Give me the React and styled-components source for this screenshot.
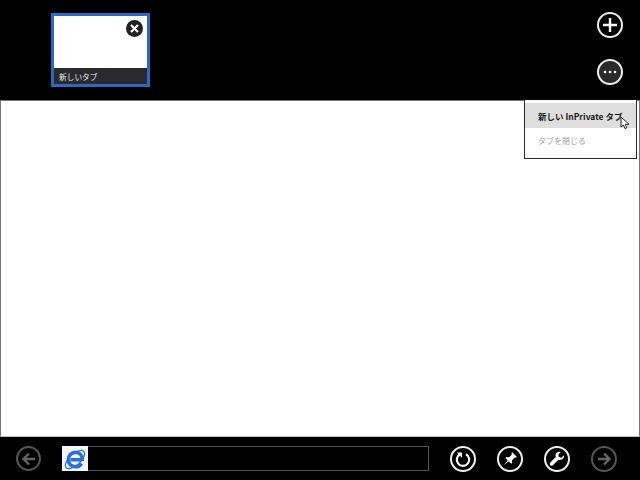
import React from 'react'
import styled, { createGlobalStyle } from 'styled-components'

const Global = createGlobalStyle`
  html, body { margin: 0; padding: 0; background: #000; }
  body { font-family: "Noto Sans CJK JP", "Noto Sans", sans-serif; }
`

const Screen = styled.div`
  position: relative;
  width: 640px;
  height: 480px;
  display: flex;
  flex-direction: column;
  overflow: hidden;
  background: #000;
`

const TabBar = styled.div`
  height: 100px;
  flex: none;
  display: flex;
  justify-content: space-between;
  padding: 13px 17px 0 51px;
  box-sizing: border-box;
  background: #000;
`

const Thumb = styled.div`
  position: relative;
  width: 99px;
  height: 74px;
  box-sizing: border-box;
  border: 3px solid #2c68c4;
  background: #fff;
  display: flex;
  flex-direction: column;
  justify-content: flex-end;
`

const Caption = styled.div`
  height: 16px;
  background: #2a2a2c;
  color: #eee;
  font-size: 7.700px;
  line-height: 17px;
  padding-left: 5px;
`

const CloseBadge = styled.div`
  position: absolute;
  top: 4px;
  right: 4px;
  width: 17px;
  height: 17px;
  border-radius: 50%;
  background: #222;
  display: flex;
  align-items: center;
  justify-content: center;
`

const TabActions = styled.div`
  display: flex;
  flex-direction: column;
  align-items: center;
  gap: 21px;
  margin-top: -1px;
`

const Round = styled.div`
  width: ${p => p.$size || 26}px;
  height: ${p => p.$size || 26}px;
  box-sizing: border-box;
  border-radius: 50%;
  border: 2px solid ${p => (p.$dim ? '#555' : '#eee')};
  background: ${p => p.$fill || 'transparent'};
  display: flex;
  align-items: center;
  justify-content: center;
  flex: none;
`

const Page = styled.div`
  flex: 1;
  background: #fff;
  border: 1px solid #777;
  border-bottom-color: #bbb;
`

const BottomBar = styled.div`
  height: 43px;
  flex: none;
  display: flex;
  align-items: center;
  padding: 0 23px 0 16px;
  box-sizing: border-box;
  background: #000;
`

const AddressBar = styled.div`
  width: 367px;
  height: 25px;
  margin-left: 21px;
  margin-right: 21px;
  box-sizing: border-box;
  border: 1px solid #555;
  flex: none;
  display: flex;
`

const SiteIcon = styled.div`
  width: 26px;
  height: 25px;
  margin: -1px 0 0 -1px;
  background: #f4f6fa;
  display: flex;
  align-items: center;
  justify-content: center;
`

const BarButtons = styled.div`
  display: flex;
  gap: 21px;
  align-items: center;
`

const Menu = styled.div`
  position: absolute;
  top: 100px;
  left: 524px;
  width: 113px;
  height: 59px;
  box-sizing: border-box;
  border: 1px solid #2a2a2a;
  border-top: none;
  background: #fff;
  padding-top: 3px;
`

const MenuItem = styled.div`
  height: ${p => (p.$active ? 25 : 28)}px;
  line-height: ${p => (p.$active ? 27 : 26)}px;
  padding-left: 13px;
  font-size: ${p => (p.$active ? 8.5 : 8)}px;
  font-weight: ${p => (p.$active ? 700 : 400)};
  white-space: nowrap;
  color: ${p => (p.$active ? '#1a1a1a' : '#a0a0a0')};
  background: ${p => (p.$active ? '#dedede' : 'transparent')};
`

const Cursor = styled.svg`
  position: absolute;
  left: 620px;
  top: 116px;
`

const Arrow = ({ flip, color }) => (
  <svg width="16" height="14" viewBox="0 0 16 14" style={flip ? { transform: 'scaleX(-1)' } : undefined}>
    <path d="M8 1.500L2.500 7 8 12.500M3 7h11" fill="none" stroke={color} strokeWidth="2.400" />
  </svg>
)

const IeLogo = () => (
  <svg width="24" height="24" viewBox="0 0 24 24">
    <ellipse cx="12" cy="12.500" rx="12" ry="5.500" transform="rotate(-42 12 12.500)" fill="none" stroke="#2a6fdc" strokeWidth="1.200" />
    <path
      d="M18.500 12.800H7.500M18.500 16.500c-1.300 2.200-3.400 3.300-6 3.300-4.200 0-7.200-3-7.200-7.200s3-7.200 7.200-7.200 6.800 3 6.800 7.200v1.500"
      fill="none"
      stroke="#2a6fdc"
      strokeWidth="3.600"
    />
  </svg>
)

const App = () => (
  <Screen>
    <Global />
    <TabBar>
      <Thumb>
        <CloseBadge>
          <svg width="9" height="9" viewBox="0 0 9 9">
            <path d="M1 1l7 7M8 1L1 8" stroke="#fff" strokeWidth="2.200" />
          </svg>
        </CloseBadge>
        <Caption>新しいタブ</Caption>
      </Thumb>
      <TabActions>
        <Round>
          <svg width="14" height="14" viewBox="0 0 14 14">
            <path d="M7 0v14M0 7h14" stroke="#fff" strokeWidth="2.400" />
          </svg>
        </Round>
        <Round $fill="#2a2a2a">
          <svg width="14" height="4" viewBox="0 0 14 4">
            <circle cx="2" cy="2" r="1.300" fill="#fff" />
            <circle cx="7" cy="2" r="1.300" fill="#fff" />
            <circle cx="12" cy="2" r="1.300" fill="#fff" />
          </svg>
        </Round>
      </TabActions>
    </TabBar>
    <Page />
    <BottomBar>
      <Round $size={25} $dim>
        <Arrow color="#666" />
      </Round>
      <AddressBar>
        <SiteIcon>
          <IeLogo />
        </SiteIcon>
      </AddressBar>
      <BarButtons>
        <Round>
          <svg width="16" height="16" viewBox="0 0 16 16">
            <path d="M5 3.200a6.200 6.200 0 1 0 6 0" fill="none" stroke="#fff" strokeWidth="2.200" />
            <path d="M1.800 1.500h5.200v5.200z" fill="#fff" />
          </svg>
        </Round>
        <Round>
          <svg width="16" height="16" viewBox="0 0 16 16">
            <path d="M10 1l5 5-1.500 .8-.8-.3-2.700 2.700.2 2.600-1 1L3.500 7.100l1-1 2.600.2 2.700-2.700-.3-.8zM5.800 9.200L2 14l4.800-3.800z" fill="#fff" />
          </svg>
        </Round>
        <Round>
          <svg width="16" height="16" viewBox="0 0 16 16">
            <path
              d="M15 4.300l-2.600 2.400-2.500-.6-.6-2.500L11.700 1c-2-.6-4.400.3-5 2.300-.3 1-.2 2 .1 2.800L1.300 11.600c-.7.7-.7 1.800 0 2.600.8.700 1.900.7 2.600 0l5.500-5.500c2.800 1 6.200-1.200 5.600-4.400z"
              fill="#fff"
            />
          </svg>
        </Round>
        <Round $dim>
          <Arrow flip color="#666" />
        </Round>
      </BarButtons>
    </BottomBar>
    <Menu>
      <MenuItem $active>新しい InPrivate タブ</MenuItem>
      <MenuItem>タブを閉じる</MenuItem>
    </Menu>
    <Cursor width="10" height="14" viewBox="0 0 10 14">
      <path d="M1 1v10l2.400-2 1.600 3.600 1.800-.8-1.600-3.500H9z" fill="#fff" stroke="#222" strokeWidth="1" />
    </Cursor>
  </Screen>
)

export default App
